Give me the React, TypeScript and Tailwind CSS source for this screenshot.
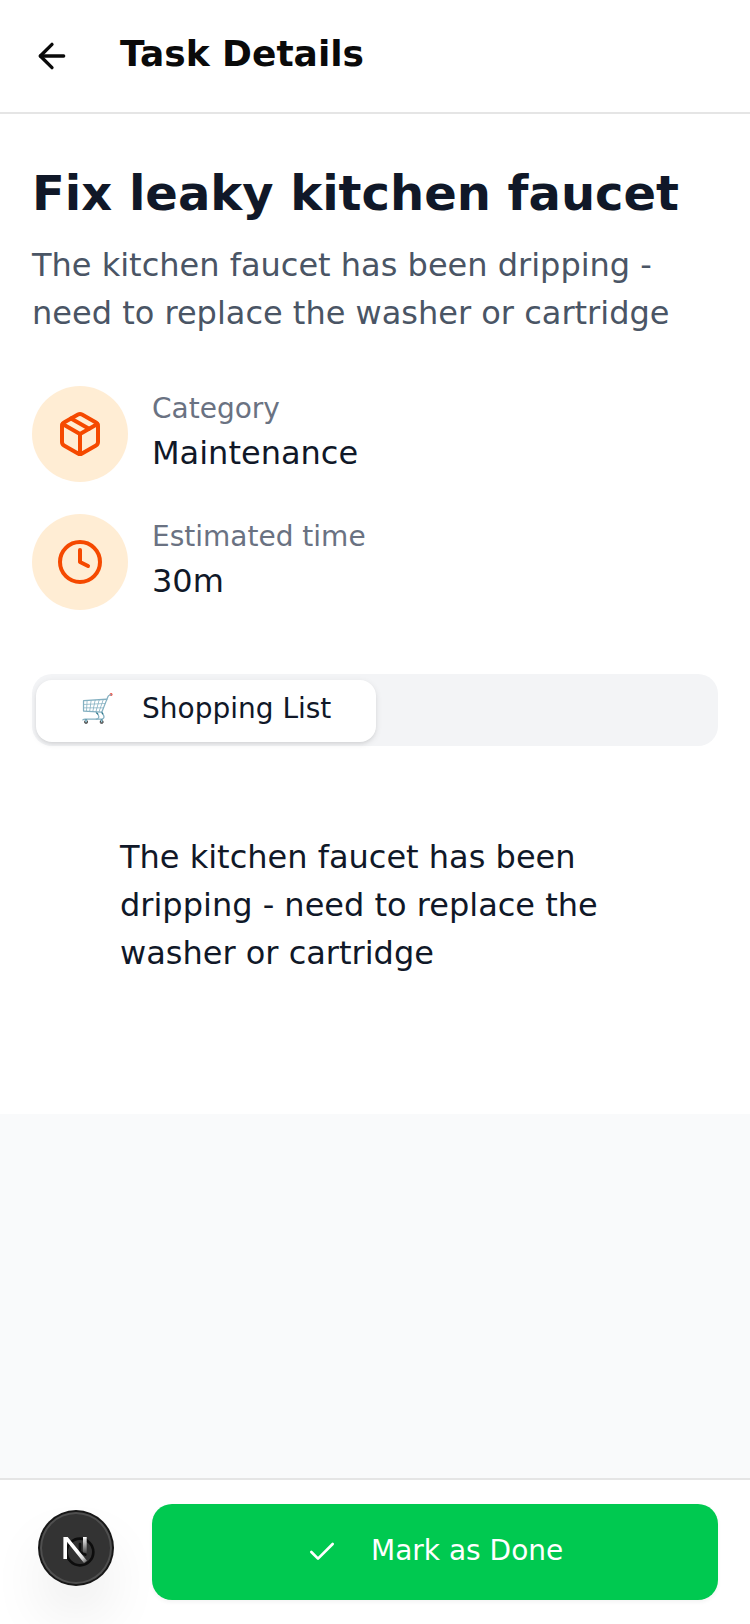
import { ArrowLeft, Check, Clock, Package } from "lucide-react";
import type { ReactNode } from "react";

function Detail({ icon, label, value }: { icon: ReactNode; label: string; value: string }) {
  return (
    <div className="flex items-center gap-6">
      <div className="flex size-24 items-center justify-center rounded-full bg-orange-100 text-[#f54900]">{icon}</div>
      <div className="-mt-0.5">
        <p className="text-[28px] leading-10 text-gray-500">{label}</p>
        <p className="text-[32px] leading-12 text-gray-900">{value}</p>
      </div>
    </div>
  );
}

function DevBadge() {
  return (
    <div className="relative flex size-18 items-center justify-center rounded-full bg-[#333333] shadow-[0_0_0_2px_#171717,inset_0_0_0_2px_rgba(255,255,255,0.14),0_32px_64px_-16px_rgba(0,0,0,0.24)]">
      <Clock className="absolute top-6 left-6 size-8 text-[#0d0d0d]" strokeWidth={2} />
      <svg className="relative size-10" viewBox="0 0 40 40" fill="none">
        <defs>
          <linearGradient id="diagonal" x1="22" y1="24" x2="30" y2="34" gradientUnits="userSpaceOnUse">
            <stop stopColor="white" />
            <stop offset="0.6" stopColor="white" stopOpacity="0.8" />
            <stop offset="1" stopColor="white" stopOpacity="0.3" />
          </linearGradient>
          <linearGradient id="stem" x1="29" y1="9" x2="29" y2="25" gradientUnits="userSpaceOnUse">
            <stop stopColor="white" />
            <stop offset="1" stopColor="white" stopOpacity="0.1" />
          </linearGradient>
        </defs>
        <path d="M7.4 31V9h4.3L31 32.8 28 35 11 13.8V31z" fill="url(#diagonal)" />
        <path d="M27 9h3.7v16H27z" fill="url(#stem)" />
      </svg>
    </div>
  );
}

export default function App() {
  return (
    <div className="flex h-[1624px] w-[750px] flex-col bg-gray-50 font-['DejaVu_Sans',sans-serif]">
      <header className="flex h-[114px] shrink-0 items-center border-b-2 border-[#e5e5e5] bg-white px-8">
        <ArrowLeft className="size-10 text-neutral-950" />
        <h1 className="-mt-1 ml-12 text-[36px] leading-[56px] font-bold text-neutral-950">Task Details</h1>
      </header>
      <main className="h-[1000px] shrink-0 bg-white px-8 pt-[47px]">
        <h2 className="text-[48px] leading-16 font-bold text-gray-900">Fix leaky kitchen faucet</h2>
        <p className="mt-4 text-[32px] leading-12 text-gray-600">The kitchen faucet has been dripping - need to replace the washer or cartridge</p>
        <div className="mt-[49px] flex flex-col gap-8">
          <Detail icon={<Package className="size-12" />} label="Category" value="Maintenance" />
          <Detail icon={<Clock className="size-12" />} label="Estimated time" value="30m" />
        </div>
        <div className="mt-16 flex h-18 items-center rounded-[20px] bg-gray-100 pt-0.5 pl-1">
          <button className="flex h-[62px] w-[340px] items-center rounded-[16px] bg-white pb-1 pl-11 text-[28px] leading-10 text-gray-900 shadow-[0_2px_6px_rgba(0,0,0,0.1),0_2px_4px_-2px_rgba(0,0,0,0.1)]">
            <span>🛒</span>
            <span className="ml-[27px]">Shopping List</span>
          </button>
        </div>
        <p className="mt-[87px] ml-[88px] w-[500px] text-[32px] leading-12 text-gray-900">The kitchen faucet has been dripping - need to replace the washer or cartridge</p>
      </main>
      <footer className="mt-auto flex h-[146px] shrink-0 border-t-2 border-[#e5e5e5] bg-white pt-6 pr-8 pl-10">
        <div className="mt-2 h-18 w-28">
          <DevBadge />
        </div>
        <button className="flex h-24 w-[566px] items-center rounded-[20px] bg-[#00c950] pl-[154px] text-[28px] leading-10 text-white shadow-[0_2px_4px_rgba(0,0,0,0.05)]">
          <Check className="size-8" />
          <span className="-mt-0.5 ml-[33px]">Mark as Done</span>
        </button>
      </footer>
    </div>
  );
}
